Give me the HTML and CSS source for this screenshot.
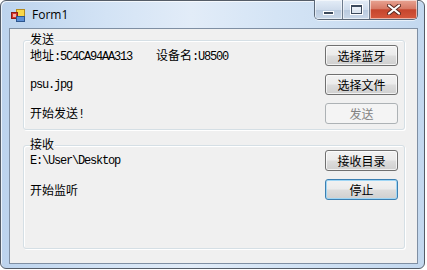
FILE: index.html
```html
<!DOCTYPE html>
<html lang="zh">
<head>
  <meta charset="UTF-8">
  <title>Form1</title>
  <link rel="stylesheet" href="styles.css">
</head>
<body>

  <div class="window">
    <div class="titlebar">
      <svg class="app-icon" width="14" height="13" viewBox="0 0 14 13">
        <rect x="5.5" y="0.5" width="8" height="7" fill="#f7d64a" stroke="#b58a1c"/>
        <rect x="0.5" y="3.5" width="6" height="6" fill="#d9342b" stroke="#8e1d17"/>
        <rect x="2" y="5" width="3" height="3" fill="#f6b0a8"/>
        <rect x="5.5" y="7.5" width="8" height="5" fill="#5c8fd6" stroke="#2d568f"/>
      </svg>
      <span class="caption">Form1</span>
      <div class="caption-buttons">
        <span class="cb cb-min"><i class="glyph-min"></i></span>
        <span class="cb cb-max"><i class="glyph-max"></i></span>
        <span class="cb cb-close">
          <svg width="14" height="11" viewBox="0 0 14 11">
            <path d="M2 1.5 L12 9.5 M12 1.5 L2 9.5" stroke="#5a2a22" stroke-width="4" stroke-linecap="round"/>
            <path d="M2 1.5 L12 9.5 M12 1.5 L2 9.5" stroke="#ffffff" stroke-width="2.2" stroke-linecap="round"/>
          </svg>
        </span>
      </div>
    </div>

    <div class="client">
      <div class="group group-send">
        <div class="group-title">发送</div>
        <div class="rows">
          <div class="row">
            <div class="labels">
              <span class="label addr">地址<span class="mono">:5C4CA94AA313</span></span>
              <span class="label">设备名<span class="mono">:U8500</span></span>
            </div>
            <button class="btn">选择蓝牙</button>
          </div>
          <div class="row">
            <span class="label mono">psu.jpg</span>
            <button class="btn">选择文件</button>
          </div>
          <div class="row">
            <span class="label">开始发送<span class="mono">!</span></span>
            <button class="btn" disabled>发送</button>
          </div>
        </div>
      </div>

      <div class="group group-recv">
        <div class="group-title">接收</div>
        <div class="rows">
          <div class="row">
            <span class="label mono">E:\User\Desktop</span>
            <button class="btn">接收目录</button>
          </div>
          <div class="row">
            <span class="label">开始监听</span>
            <button class="btn btn-default">停止</button>
          </div>
        </div>
      </div>
    </div>
  </div>

</body>
</html>
```

FILE: styles.css
```css
body {
  margin: 0;
  padding: 0;
  background: #ffffff;
  font-family: "Noto Sans CJK SC", "Noto Sans", sans-serif;
  font-size: 12px;
  color: #000000;
}

.window {
  box-sizing: border-box;
  width: 425px;
  height: 269px;
  padding: 0 6px 0 8px;
  border: 1px solid #555d68;
  border-radius: 6px;
  background: linear-gradient(to right, #bcd3ed 0%, #d3e3f5 25%, #e2ecf8 45%, #d4e4f5 65%, #c3d8ef 100%);
  box-shadow: inset 1px 1px 0 rgba(255, 255, 255, 0.7);
}

.titlebar {
  height: 27px;
  display: flex;
  align-items: flex-start;
}

.app-icon {
  margin: 8px 0 0 2px;
}

.caption {
  margin: 6px 0 0 7px;
  font-family: "Segoe UI", "Open Sans", sans-serif;
  font-size: 12px;
  line-height: 16px;
}

.caption-buttons {
  margin: -1px 0 0 auto;
  display: flex;
  height: 19px;
  border: 1px solid #5b6878;
  border-top: none;
  border-radius: 0 0 5px 5px;
  overflow: hidden;
  box-shadow: 0 1px 0 rgba(255, 255, 255, 0.6);
}

.cb {
  display: flex;
  align-items: center;
  justify-content: center;
  height: 19px;
  background: linear-gradient(#e4edf7 0%, #cfdcec 50%, #b8c9de 51%, #c9d8e9 100%);
  box-shadow: inset 0 0 0 1px rgba(255, 255, 255, 0.55);
}

.cb-min {
  width: 27px;
  border-right: 1px solid #6d7b8c;
}

.cb-max {
  width: 26px;
  border-right: 1px solid #6d7b8c;
}

.cb-close {
  width: 47px;
  background: linear-gradient(#e8a493 0%, #d77a66 45%, #c5452d 52%, #d5583d 100%);
}

.glyph-min {
  display: block;
  width: 9px;
  height: 2px;
  margin-top: 6px;
  background: #3c4a5c;
  border: 1px solid #ffffff;
}

.glyph-max {
  display: block;
  box-sizing: border-box;
  width: 11px;
  height: 9px;
  border: 1px solid #3c4a5c;
  border-top-width: 2px;
  outline: 1px solid #ffffff;
  background: rgba(255, 255, 255, 0.5);
}

.client {
  box-sizing: border-box;
  height: 236px;
  border: 1px solid #7f8fa3;
  background: #f0f0f0;
  padding: 11px 12px 0 13px;
}

.group {
  box-sizing: border-box;
  border: 1px solid #d5dfe5;
  border-radius: 3px;
  box-shadow: inset 1px 1px 0 #ffffff, 1px 1px 0 #ffffff;
  padding: 0 5px 0 6px;
}

.group-send {
  height: 90px;
}

.group-recv {
  height: 104px;
  margin-top: 15px;
}

.group-title {
  width: fit-content;
  margin: -9px 0 -5px 0;
  padding: 0 1px 0 0;
  line-height: 14px;
  background: #f0f0f0;
}

.rows {
  display: flex;
  flex-direction: column;
  gap: 6px;
  padding-top: 3px;
}

.row {
  display: flex;
  align-items: center;
  justify-content: space-between;
  height: 23px;
}

.labels {
  display: flex;
}

.label {
  line-height: 14px;
}

.addr {
  width: 126px;
}

.mono {
  font-family: "Liberation Mono", "DejaVu Sans Mono", monospace;
  font-size: 12px;
  letter-spacing: -1.2px;
}

.btn {
  box-sizing: border-box;
  width: 73px;
  height: 21px;
  margin: 1px;
  padding: 0;
  font-family: "Noto Sans CJK SC", sans-serif;
  font-size: 12px;
  line-height: 19px;
  color: #000000;
  border: 1px solid #707070;
  border-radius: 3px;
  background: linear-gradient(#f2f2f2 0%, #ebebeb 48%, #dddddd 52%, #cfcfcf 100%);
  box-shadow: inset 0 0 0 1px rgba(255, 255, 255, 0.7);
}

.btn-default {
  border-color: #3c7fb1;
  box-shadow: inset 0 0 0 1px #9fd6f5;
}

.btn:disabled {
  border-color: #adb2b5;
  background: #f4f4f4;
  color: #838383;
  box-shadow: none;
}
```
